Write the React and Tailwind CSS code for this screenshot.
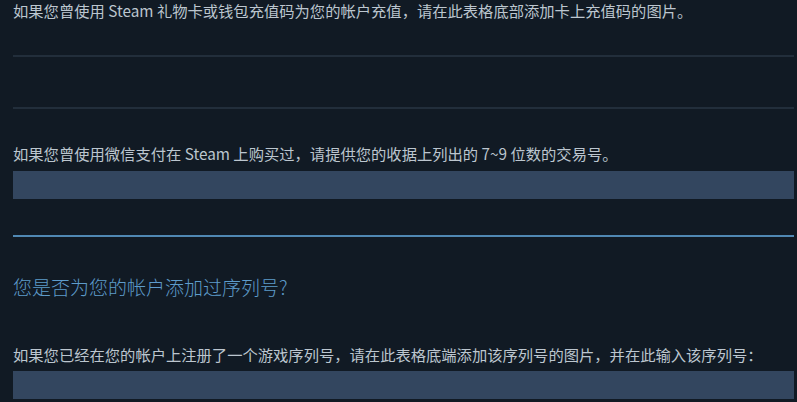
export default function App() {
  return (
    <div
      className="w-[797px] h-[402px] overflow-hidden bg-[#111a24] pl-[13px] pr-[3px] text-[#bcc6cf]"
      style={{ fontFamily: '"Noto Sans CJK SC", "Noto Sans", sans-serif' }}
    >
      {/* gift card section */}
      <p className="text-[15.3px] leading-[21px]">
        如果您曾使用 Steam 礼物卡或钱包充值码为您的帐户充值，请在此表格底部添加卡上充值码的图片。
      </p>
      <div className="mt-[34px] h-[2px] bg-[#222e3b]" />
      <div className="mt-[50px] h-[2px] bg-[#222e3b]" />

      {/* wechat section */}
      <p className="mt-[34px] text-[15.3px] leading-[20px]">
        如果您曾使用微信支付在 Steam 上购买过，请提供您的收据上列出的 7~9 位数的交易号。
      </p>
      <input
        type="text"
        className="mt-[8px] block w-full h-[28px] bg-[#33465f] border-0 outline-none"
      />
      <div className="mt-[36px] h-[2px] bg-[#5088b3]" />

      {/* product key section */}
      <h2 className="mt-[38px] text-[19px] leading-[24px] font-light text-[#5e9ccb]">
        您是否为您的帐户添加过序列号?
      </h2>
      <p className="mt-[45px] text-[15.3px] leading-[20px]">
        如果您已经在您的帐户上注册了一个游戏序列号，请在此表格底端添加该序列号的图片，并在此输入该序列号：
      </p>
      <input
        type="text"
        className="mt-[7px] block w-full h-[28px] bg-[#33465f] border-0 outline-none"
      />
    </div>
  );
}
